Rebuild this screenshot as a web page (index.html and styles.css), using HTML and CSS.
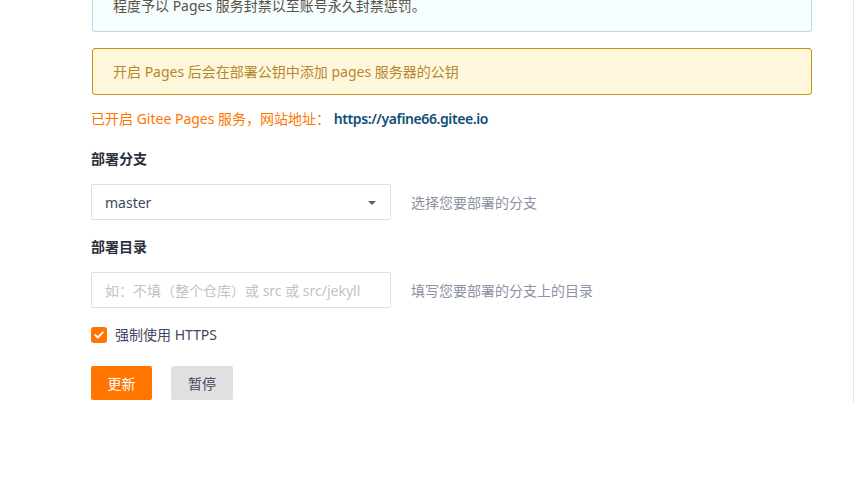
FILE: index.html
```html
<!DOCTYPE html>
<html lang="zh-CN">
<head>
<meta charset="utf-8">
<title>Gitee Pages</title>
<link rel="stylesheet" href="styles.css">
</head>
<body>
<div class="page">
  <div class="content">
    <div class="notice notice-info">程度予以 Pages 服务封禁以至账号永久封禁惩罚。</div>
    <div class="notice notice-warn">开启 Pages 后会在部署公钥中添加 pages 服务器的公钥</div>
    <div class="status">已开启 Gitee Pages 服务，网站地址： <a class="site-link" href="#">https://yafine66.gitee.io</a></div>

    <div class="field">
      <div class="label">部署分支</div>
      <div class="row">
        <div class="select">
          <span>master</span>
          <span class="caret"></span>
        </div>
        <span class="help">选择您要部署的分支</span>
      </div>
    </div>

    <div class="field">
      <div class="label">部署目录</div>
      <div class="row">
        <input class="input" type="text" placeholder="如：不填（整个仓库）或 src 或 src/jekyll">
        <span class="help">填写您要部署的分支上的目录</span>
      </div>
    </div>

    <label class="check">
      <span class="box"><svg width="10" height="8" viewBox="0 0 10 8"><path d="M1.2 4.1 L3.8 6.5 L8.8 1.4" fill="none" stroke="#fff" stroke-width="2" stroke-linecap="round" stroke-linejoin="round"/></svg></span>
      <span>强制使用 HTTPS</span>
    </label>

    <div class="actions">
      <button class="btn btn-primary">更新</button>
      <button class="btn btn-default">暂停</button>
    </div>
  </div>
</div>
</body>
</html>
```

FILE: styles.css
```css
* { box-sizing: border-box; }
html, body { margin: 0; padding: 0; background: #fff; }
body {
  font-family: "Noto Sans", "Noto Sans CJK SC", sans-serif;
  font-size: 14px;
  line-height: 21px;
  color: #40485b;
  overflow: hidden;
}
.page {
  width: 854px;
  height: 420px;
  border-right: 1px solid #e3e3e3;
}
.content {
  padding-left: 91px;
  width: 812px;
}
.notice {
  border-radius: 3px;
  padding: 12px 20px;
  border: 1px solid;
}
.notice-info {
  margin-top: -18px;
  padding-bottom: 15px;
  background: #f6feff;
  border-color: #b7d9e3;
  color: #5b5245;
  margin-left: 1px;
}
.notice-warn {
  margin-top: 16px;
  margin-left: 1px;
  background: #fff7db;
  border-color: #c99119;
  color: #b5882f;
}
.status {
  margin-top: 13px;
  color: #ff7500;
}
.site-link {
  color: #0d4f73;
  font-weight: 600;
  letter-spacing: -0.4px;
  text-decoration: none;
}
.field { margin-top: 19px; }
.field + .field { margin-top: 16px; }
.label {
  font-weight: 700;
  color: #2a2f3a;
  margin-bottom: 15px;
}
.row {
  display: flex;
  align-items: center;
  gap: 20px;
}
.select, .input {
  width: 300px;
  height: 36px;
  border: 1px solid #dcdfe6;
  border-radius: 2px;
  background: #fff;
  padding: 0 13px;
  font: inherit;
  color: #40485b;
}
.select {
  display: flex;
  align-items: center;
  justify-content: space-between;
}
.caret {
  width: 0;
  height: 0;
  border-left: 4px solid transparent;
  border-right: 4px solid transparent;
  border-top: 4px solid #5a6070;
  margin-right: 1px;
  margin-top: 2px;
}
.input { outline: none; }
.input::placeholder { color: #c0c3c9; }
.help { color: #8c92a4; }
.check {
  display: flex;
  align-items: center;
  gap: 8px;
  margin-top: 16px;
  color: #40485b;
}
.box {
  width: 16px;
  height: 16px;
  border-radius: 3px;
  background: #ff7500;
  display: flex;
  align-items: center;
  justify-content: center;
}
.actions {
  display: flex;
  gap: 19px;
  margin-top: 21px;
}
.btn {
  height: 34px;
  border: none;
  border-radius: 2px;
  font: inherit;
  padding: 0;
  cursor: pointer;
}
.btn-primary {
  width: 61px;
  background: #ff7500;
  color: #fff;
}
.btn-default {
  width: 62px;
  background: #e0e0e0;
  color: #40485b;
}
```
